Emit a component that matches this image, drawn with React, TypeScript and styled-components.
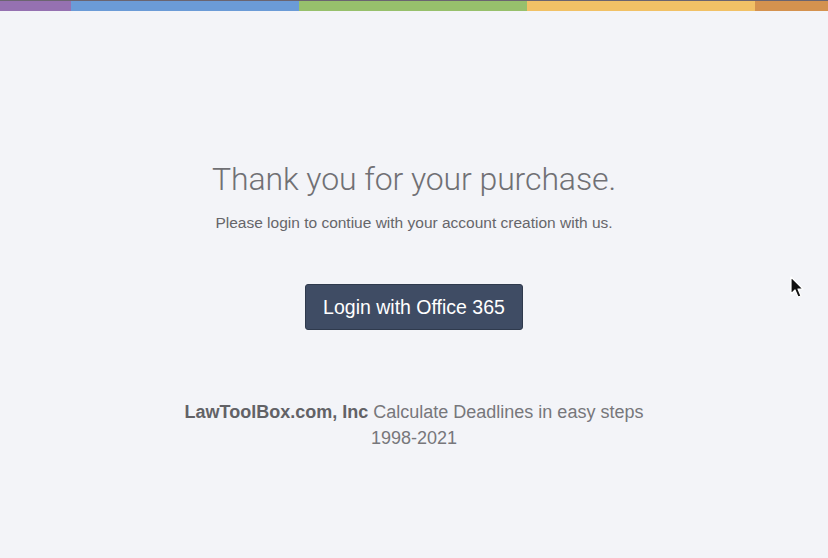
import styled, { createGlobalStyle } from 'styled-components';

const GlobalStyle = createGlobalStyle`
  html, body {
    margin: 0;
    padding: 0;
    background: #f3f4f8;
  }
  body {
    font-family: "Liberation Sans", Arial, sans-serif;
  }
`;

const Page = styled.div`
  position: relative;
  width: 100%;
  min-height: 558px;
  background: #f3f4f8;
  overflow: hidden;
`;

const ColorBar = styled.div`
  display: grid;
  grid-template-columns: 71px 228px 228px 228px 1fr;
  height: 10px;
  border-top: 1px solid #6a6470;
`;

const Stripe = styled.div<{ $color: string }>`
  background: ${(p) => p.$color};
`;

const Content = styled.main`
  display: flex;
  flex-direction: column;
  align-items: center;
  padding-top: 148px;
  text-align: center;
`;

const Title = styled.h1`
  margin: 0;
  font-family: Roboto, "Liberation Sans", sans-serif;
  font-weight: 300;
  font-size: 32px;
  line-height: 40px;
  color: #707074;
  letter-spacing: -0.1px;
`;

const Subtitle = styled.p`
  margin: 13px 0 0;
  font-size: 15.5px;
  line-height: 21px;
  color: #66666a;
`;

const LoginButton = styled.button`
  margin-top: 51px;
  width: 218px;
  height: 46px;
  background: #3f4c64;
  border: 1px solid #2f3a4d;
  border-radius: 3px;
  color: #ffffff;
  font-family: "Liberation Sans", Arial, sans-serif;
  font-size: 19.5px;
  cursor: pointer;
`;

const Footer = styled.footer`
  margin-top: 69px;
  font-size: 18px;
  line-height: 26px;
  color: #77777b;
`;

const Brand = styled.strong`
  font-weight: 700;
  color: #626266;
`;

const Cursor = styled.svg`
  position: absolute;
  left: 790px;
  top: 276px;
`;

const stripes = ['#9571b1', '#6b9bd7', '#97c06c', '#f1c166', '#d4924f'];

export default function App() {
  return (
    <>
      <GlobalStyle />
      <Page>
        <ColorBar>
          {stripes.map((c) => (
            <Stripe key={c} $color={c} />
          ))}
        </ColorBar>
        <Content>
          <Title>Thank you for your purchase.</Title>
          <Subtitle>Please login to contiue with your account creation with us.</Subtitle>
          <LoginButton>Login with Office 365</LoginButton>
          <Footer>
            <Brand>LawToolBox.com, Inc</Brand> Calculate Deadlines in easy steps
            <br />
            1998-2021
          </Footer>
        </Content>
        <Cursor width="16" height="24" viewBox="0 0 16 24">
          <path
            d="M1 1 L1 18 L5 14 L8 21 L11 20 L8 13 L13 13 Z"
            fill="#111"
            stroke="#fff"
            strokeWidth="1.2"
            strokeLinejoin="round"
          />
        </Cursor>
      </Page>
    </>
  );
}
